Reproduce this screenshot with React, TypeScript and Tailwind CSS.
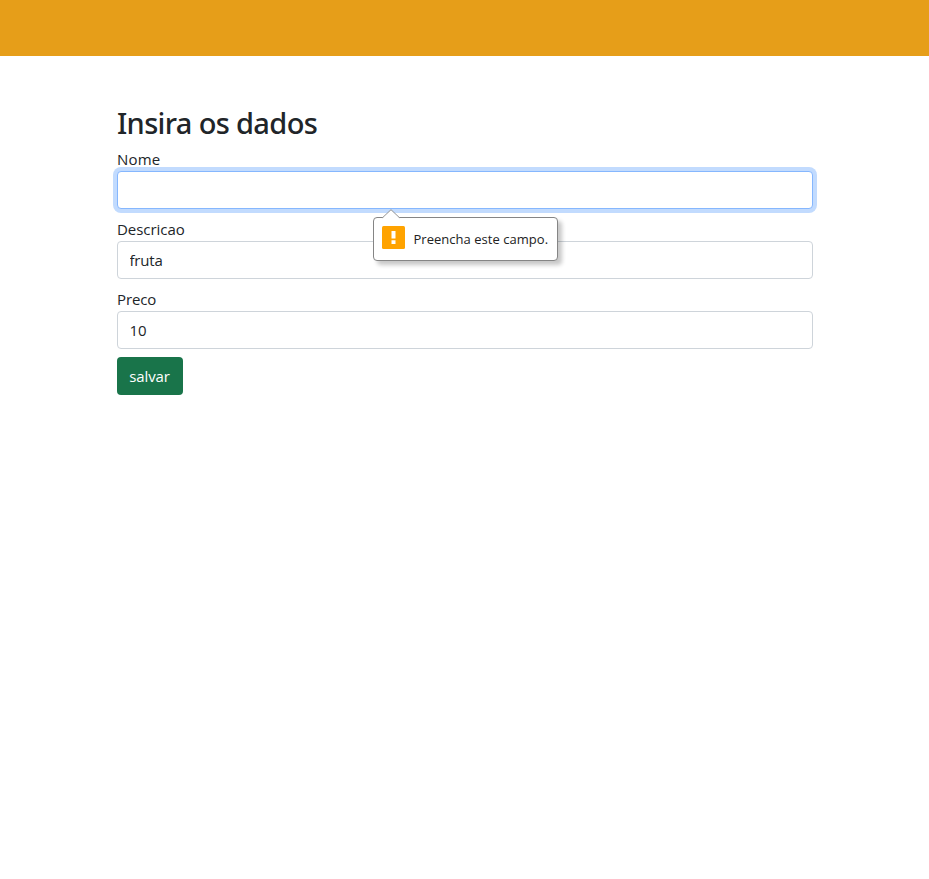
import type { ReactNode } from "react";

type FieldProps = {
  id: string;
  label: string;
  labelClass: string;
  value: string;
  focused?: boolean;
  children?: ReactNode;
};

function Field({ id, label, labelClass, value, focused = false, children }: FieldProps) {
  return (
    <div className="relative mb-2">
      <label htmlFor={id} className="block h-6 leading-6">
        <span className={labelClass}>{label}</span>
      </label>
      <input
        id={id}
        defaultValue={value}
        className={
          "block h-[38px] w-full rounded border bg-white px-[11.5px] py-1.5 leading-6 tracking-[-0.2px] outline-none " +
          (focused
            ? "border-[#86b7fe] shadow-[0_0_0_4px_#c2dbfe]"
            : "border-[#ced4da]")
        }
      />
      {children}
    </div>
  );
}

function ValidationBubble() {
  return (
    <div className="absolute left-[256px] top-[70px] z-10 flex h-[44px] w-[185px] items-center rounded-[4px] border border-[#858585] bg-white pl-2 shadow-[4px_4px_4px_rgba(0,0,0,0.22)]">
      <svg className="absolute -top-[9px] left-[8px]" width="18" height="10" viewBox="0 0 18 10">
        <path d="M0.5 9 L9 0.7 L17.5 9 V10 H0.5 Z" fill="#fff" />
        <path d="M0.5 8.7 L9 0.7 L17.5 8.7" fill="none" stroke="#949494" />
      </svg>
      <svg className="-mt-[3px] shrink-0" width="24" height="23" viewBox="0 0 24 23">
        <rect x="0" y="0" width="23" height="23" rx="1.5" fill="#ffa300" />
        <path d="M9.5 5h4v7.5h-4z M9.5 14.3h4v3.6h-4z" fill="#fff" />
      </svg>
      <span className="ml-[7.5px] whitespace-nowrap text-[13px] leading-5 tracking-[0.03px] text-[#222]">
        Preencha este campo.
      </span>
    </div>
  );
}

export default function App() {
  return (
    <div className="min-h-screen bg-white font-['Open_Sans','Noto_Sans',sans-serif] text-[15px] text-[#212529]">
      <header className="h-14 bg-[#e69e19]" />
      <main className="ml-[117px] w-[696px] pt-[45px]">
        <h2 className="mb-2 h-[38px] whitespace-nowrap font-['Noto_Sans','Open_Sans',sans-serif] text-[29px] font-medium leading-[44px] tracking-[-0.65px]">
          Insira os dados
        </h2>
        <form onSubmit={(event) => event.preventDefault()} noValidate>
          <Field id="nome" label="Nome" labelClass="tracking-[0.2px]" value="" focused>
            <ValidationBubble />
          </Field>
          <Field id="descricao" label="Descricao" labelClass="tracking-[-0.05px]" value="fruta" />
          <Field id="preco" label="Preco" labelClass="tracking-[-0.1px]" value="10" />
          <button
            type="submit"
            className="block h-[38px] w-[66px] rounded bg-[#19744a] pr-px text-center leading-6 tracking-[-0.15px] text-white"
          >
            salvar
          </button>
        </form>
      </main>
    </div>
  );
}
